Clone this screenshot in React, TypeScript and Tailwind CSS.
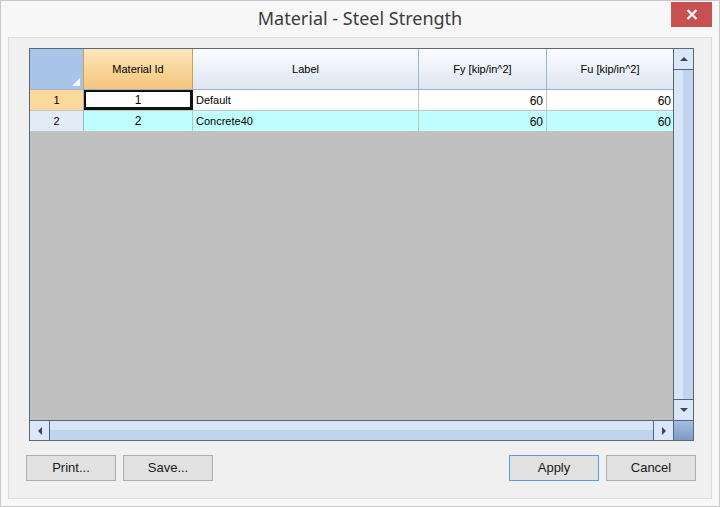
import React from 'react';

type Row = { id: string; label: string; fy: string; fu: string; selected?: boolean };

const rows: Row[] = [
  { id: '1', label: 'Default', fy: '60', fu: '60', selected: true },
  { id: '2', label: 'Concrete40', fy: '60', fu: '60' },
];

function Arrow({ dir }: { dir: 'up' | 'down' | 'left' | 'right' }) {
  const pts = {
    up: '0,5 4,1 8,5',
    down: '0,1 8,1 4,5',
    left: '5,0 5,8 1,4',
    right: '1,0 1,8 5,4',
  }[dir];
  const vert = dir === 'up' || dir === 'down';
  return (
    <svg width={vert ? 8 : 6} height={vert ? 6 : 8} viewBox={vert ? '0 0 8 6' : '0 0 6 8'}>
      <polygon points={pts} fill="#3a475a" />
    </svg>
  );
}

function Button({ children, primary }: { children: React.ReactNode; primary?: boolean }) {
  return (
    <button
      className={
        'h-[26px] w-[90px] bg-[#e1e1e1] text-[13px] text-[#1a1a1a] border ' +
        (primary ? 'border-[#5a9ee2]' : 'border-[#adadad]')
      }
    >
      {children}
    </button>
  );
}

export default function App() {
  return (
    <div className="w-[720px] h-[507px] border border-[#c9c9c9] bg-[#f7f7f7] flex flex-col font-['Liberation_Sans',Arial,sans-serif]">
      {/* title bar */}
      <div className="relative h-[36px] flex items-center justify-center shrink-0">
        <span className="font-['Noto_Sans',sans-serif] text-[18px] text-[#3b3b3b] pb-[1px]">Material - Steel Strength</span>
        <button className="absolute right-[7px] top-[1px] w-[41px] h-[25px] bg-[#c75050] flex items-center justify-center">
          <svg width="12" height="11" viewBox="0 0 12 11">
            <path d="M1.5 1 L10.5 10 M10.5 1 L1.5 10" stroke="#fff" strokeWidth="2.2" />
          </svg>
        </button>
      </div>

      {/* client area */}
      <div className="flex-1 mx-[7px] mb-[7px] border border-[#dcdcdc] bg-[#f0f0f0] flex flex-col pl-[20px] pr-[17px] pt-[10px]">
        {/* grid */}
        <div className="h-[393px] border border-[#5c6878] flex flex-col bg-[#c0c0c0]">
          <div className="flex flex-1 min-h-0">
            <div className="flex-1 flex flex-col text-[11px] text-black">
              {/* header */}
              <div className="flex h-[41px] border-b border-[#9db4cd]">
                <div className="w-[54px] relative bg-[#a9c4e9] border-r border-[#c9a15c]">
                  <svg className="absolute right-[3px] bottom-[3px]" width="8" height="8" viewBox="0 0 8 8">
                    <polygon points="8,0 8,8 0,8" fill="#f2f6fc" />
                  </svg>
                </div>
                <div className="w-[109px] flex items-center justify-center bg-gradient-to-b from-[#fde6bc] to-[#f4c57a] border-r border-[#c9a15c]">
                  Material Id
                </div>
                <div className="w-[226px] flex items-center justify-center bg-gradient-to-b from-[#fbfcfe] to-[#dee6f1] border-r border-[#9db4cd]">
                  Label
                </div>
                <div className="w-[128px] flex items-center justify-center bg-gradient-to-b from-[#fbfcfe] to-[#dee6f1] border-r border-[#9db4cd]">
                  Fy [kip/in^2]
                </div>
                <div className="flex-1 flex items-center justify-center bg-gradient-to-b from-[#fbfcfe] to-[#dee6f1]">
                  Fu [kip/in^2]
                </div>
              </div>
              {/* rows */}
              {rows.map((r) => {
                const cellBg = r.selected ? 'bg-white' : 'bg-[#c0ffff]';
                return (
                  <div key={r.id} className="flex h-[21px] border-b border-[#c3c3c3]">
                    <div
                      className={
                        'w-[54px] flex items-center justify-center border-r border-[#9db4cd] ' +
                        (r.selected ? 'bg-[#fdd89c]' : 'bg-[#e3ebf7]')
                      }
                    >
                      {r.id}
                    </div>
                    <div
                      className={
                        'w-[109px] flex items-center justify-center text-[12px] ' +
                        cellBg +
                        (r.selected ? ' border-2 border-[#111] border-r-[3px] border-b-[3px]' : ' border-r border-[#c3c3c3]')
                      }
                    >
                      {r.id}
                    </div>
                    <div className={'w-[226px] pl-[3px] pt-[2px] border-r border-[#c3c3c3] ' + cellBg}>{r.label}</div>
                    <div className={'w-[128px] flex items-center justify-end pr-[3px] pt-[2px] border-r border-[#c3c3c3] text-[12px] ' + cellBg}>
                      {r.fy}
                    </div>
                    <div className={'flex-1 flex items-center justify-end pr-[2px] pt-[2px] text-[12px] ' + cellBg}>{r.fu}</div>
                  </div>
                );
              })}
            </div>

            {/* vertical scrollbar */}
            <div className="w-[20px] flex flex-col border-l border-[#56637a] bg-gradient-to-r from-[#d8e5f7] from-50% to-[#c0d4f1] to-50%">
              <div className="h-[21px] bg-[#dbe7f8] border-b border-[#56637a] flex items-center justify-center">
                <Arrow dir="up" />
              </div>
              <div className="flex-1" />
              <div className="h-[21px] bg-[#dbe7f8] border-t border-[#56637a] flex items-center justify-center">
                <Arrow dir="down" />
              </div>
            </div>
          </div>

          {/* horizontal scrollbar */}
          <div className="h-[20px] flex border-t border-[#56637a] shrink-0">
            <div className="flex-1 flex bg-gradient-to-b from-[#d8e5f7] from-50% to-[#c0d4f1] to-50%">
              <div className="w-[20px] bg-[#dbe7f8] border-r border-[#56637a] flex items-center justify-center">
                <Arrow dir="left" />
              </div>
              <div className="flex-1" />
              <div className="w-[20px] bg-[#dbe7f8] border-l border-[#56637a] flex items-center justify-center">
                <Arrow dir="right" />
              </div>
            </div>
            <div className="w-[20px] border-l border-[#56637a] bg-gradient-to-b from-[#a5bde0] to-[#7e9ac6]" />
          </div>
        </div>

        {/* buttons */}
        <div className="flex items-center mt-[14px] -ml-[3px] mr-[-2px]">
          <div className="flex gap-[7px]">
            <Button>Print...</Button>
            <Button>Save...</Button>
          </div>
          <div className="flex gap-[7px] ml-auto">
            <Button primary>Apply</Button>
            <Button>Cancel</Button>
          </div>
        </div>
      </div>
    </div>
  );
}
